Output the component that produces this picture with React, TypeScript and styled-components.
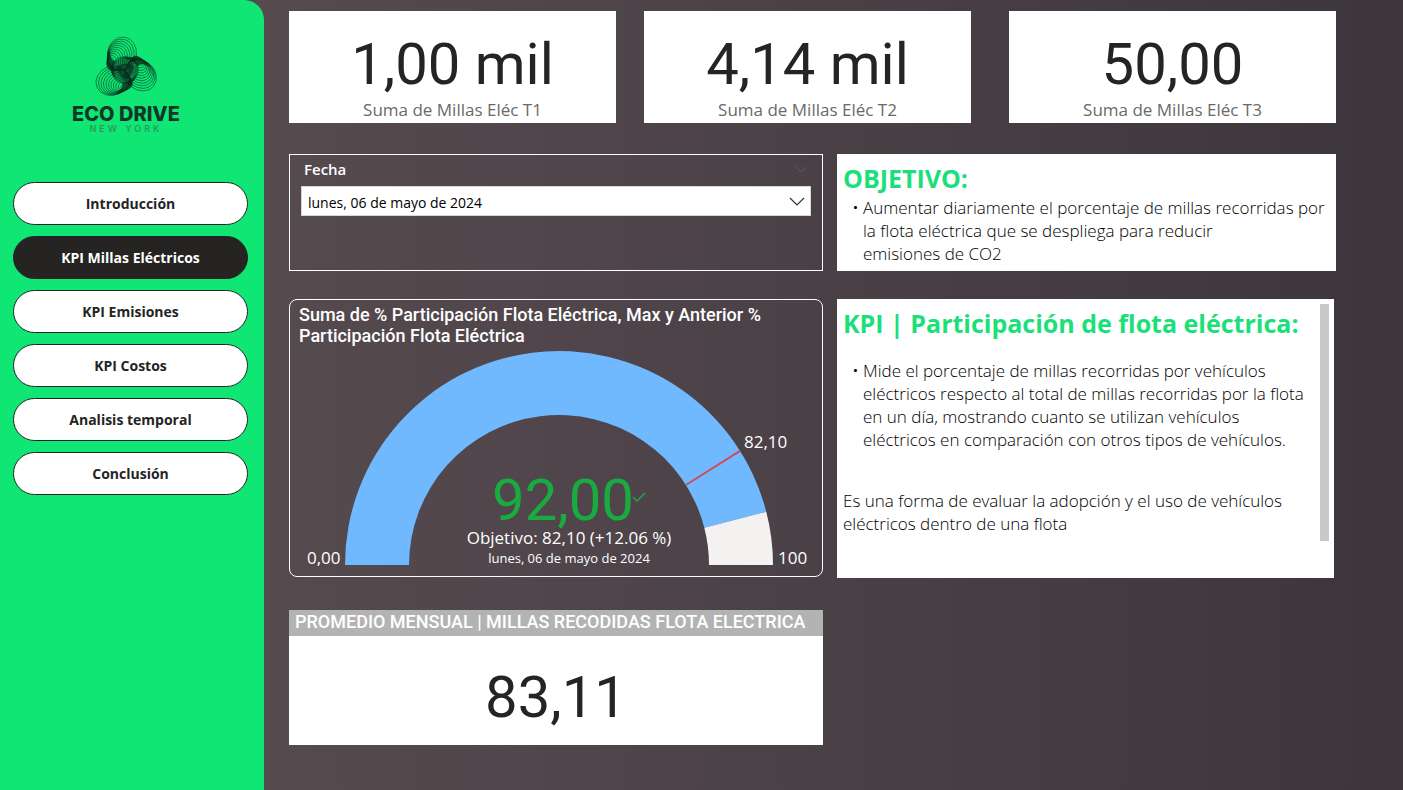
import React from "react";
import styled, { createGlobalStyle } from "styled-components";

const GlobalStyle = createGlobalStyle`
  * { box-sizing: border-box; }
  body { margin: 0; background: #fff; font-family: "Open Sans", sans-serif; color: #252423; }
  h2, p, ul, figure { margin: 0; padding: 0; }
`;

const display = `Roboto, "Liberation Sans", sans-serif`;

const Page = styled.div`
  display: flex;
  min-height: 100vh;
  background: linear-gradient(90deg, #574b50 0%, #554a4e 20%, #4a4147 58%, #3c363c 100%);
`;

const Sidebar = styled.aside`
  flex: 0 0 264px;
  padding: 34px 16px 24px 13px;
  background: #0fe673;
  border-top-right-radius: 20px;
`;

const Brand = styled.div`
  display: flex;
  flex-direction: column;
  align-items: center;
  height: 148px;
  padding-right: 9px;
`;

const BrandName = styled.div`
  margin-top: 3px;
  font: 800 20px/22px Inter, sans-serif;
  color: #14352a;
`;

const BrandPlace = styled.div`
  font: 600 9px/8px Inter, sans-serif;
  letter-spacing: 3px;
  color: #2b9a62;
`;

const Nav = styled.nav`
  display: flex;
  flex-direction: column;
  gap: 11px;
`;

const NavButton = styled.button<{ $active?: boolean }>`
  height: 43px;
  border: 1px solid #252423;
  border-radius: 22px;
  background: ${(p) => (p.$active ? "#252423" : "#fff")};
  color: ${(p) => (p.$active ? "#fff" : "#252423")};
  font: 700 14px/20px "Open Sans", sans-serif;
  cursor: pointer;
`;

const Main = styled.main`
  flex: 1;
  min-width: 0;
  padding: 11px 67px 45px 25px;
`;

const Summary = styled.section`
  display: grid;
  grid-template-columns: 682fr 327fr;
  gap: 38px;
  margin-bottom: 31px;
`;

const SummaryPair = styled.div`
  display: grid;
  grid-template-columns: 1fr 1fr;
  gap: 28px;
`;

const Card = styled.article`
  height: 112px;
  padding-top: 18px;
  background: #fff;
  text-align: center;
`;

const BigValue = styled.div`
  font: 400 58px/70px ${display};
  color: #252423;
`;

const CardLabel = styled.div`
  font: 400 17px/22px "Open Sans", sans-serif;
  color: #6b6967;
`;

const Columns = styled.div`
  display: grid;
  grid-template-columns: minmax(0, 534fr) minmax(0, 499fr);
  gap: 14px;
`;

const Column = styled.div`
  display: flex;
  flex-direction: column;
  gap: 28px;
`;

const Slicer = styled.section`
  height: 117px;
  padding: 4px 11px;
  border: 1px solid #fff;
`;

const SlicerHead = styled.div`
  display: flex;
  align-items: center;
  justify-content: space-between;
  height: 20px;
  margin-bottom: 7px;
  padding: 0 4px 0 3px;
  color: #fff;
`;

const SlicerLabel = styled.label`
  font: 600 15px/20px "Open Sans", sans-serif;
`;

const SelectBox = styled.div`
  display: grid;
  align-items: center;
  height: 30px;
  border: 1px solid #d8d6d8;
  background: #fff;
  > * { grid-area: 1 / 1; }
  > svg { justify-self: end; margin-right: 5px; pointer-events: none; }
`;

const DateSelect = styled.select`
  width: 100%;
  height: 28px;
  padding: 3px 6px 0;
  border: 0;
  background: transparent;
  appearance: none;
  font: 400 14px/20px "Open Sans", sans-serif;
  color: #000;
`;

const GaugePanel = styled.section`
  height: 278px;
  border: 1px solid #fff;
  border-radius: 8px;
  color: #fff;
`;

const GaugeTitle = styled.h2`
  height: 50px;
  padding: 4px 9px 0;
  font: 500 18px/21px ${display};
`;

const GaugeChart = styled.svg`
  display: block;
  width: 100%;
  height: 226px;
`;

const Average = styled.section`
  height: 135px;
  margin-top: 5px;
  background: #fff;
  text-align: center;
`;

const AverageTitle = styled.h2`
  height: 26px;
  margin-bottom: 26px;
  padding-left: 6px;
  background: #b3b3b3;
  color: #fff;
  font: 500 18px/23px ${display};
  text-align: left;
  white-space: nowrap;
`;

const TextPanel = styled.section<{ $scroll?: boolean }>`
  display: flex;
  justify-content: space-between;
  height: ${(p) => (p.$scroll ? "279px" : "117px")};
  margin-right: ${(p) => (p.$scroll ? "2px" : "0")};
  padding: 5px 5px 5px 6px;
  background: #fff;
`;

const PanelTitle = styled.h2<{ $spaced?: boolean }>`
  margin-bottom: ${(p) => (p.$spaced ? "18px" : "0")};
  padding-top: 1px;
  font: 700 25px/36px "Open Sans", sans-serif;
  color: #1be07a;
  white-space: nowrap;
`;

const PanelList = styled.ul`
  padding-left: 20px;
  list-style: none;
`;

const PanelItem = styled.li`
  font: 300 17px/23px "Open Sans", sans-serif;
  color: #000;
  white-space: nowrap;
  &::before { content: "·"; float: left; width: 10px; margin-left: -10px; font-weight: 700; }
`;

const PanelNote = styled.p`
  margin-top: 38px;
  font: 300 17px/23px "Open Sans", sans-serif;
  color: #000;
  white-space: nowrap;
`;

const ScrollThumb = styled.div`
  flex: none;
  width: 9px;
  height: 237px;
  background: #c8c8c8;
`;

const turns = [0, 120, 240];
const rings = Array.from({ length: 11 }, (_, i) => i);

function Logo() {
  return (
    <svg width="70" height="66" viewBox="0 0 70 66" fill="none" stroke="#08291a" strokeWidth="0.5" aria-hidden="true">
      {turns.map((turn) => (
        <g key={turn} transform={`rotate(${turn} 34 36)`}>
          {rings.map((i) => (
            <ellipse
              key={i}
              cx={31 - i}
              cy={20 + i * 1.1}
              rx={14.5 - i * 1.1}
              ry={17 - i * 1.1}
              transform="rotate(8 31 20)"
            />
          ))}
          <path d="M17 26C18 34 20 39 25 45C22 37 22 30 25 27C21 27 19 24 19 16C17 19 17 22 17 26Z" fill="#08291a" fillOpacity="0.8" stroke="none" />
        </g>
      ))}
      {rings.map((i) => (
        <circle key={i} cx="34" cy="36" r={13.5 - i * 0.9} />
      ))}
      <path d="M26 32Q35 27 43 32Q42 42 34 46Q26 41 26 32Z" fill="#08291a" fillOpacity="0.6" stroke="none" />
    </svg>
  );
}

function Chevron({ color, width }: { color: string; width: number }) {
  return (
    <svg width={width} height="9" viewBox="0 0 16 9" fill="none" stroke={color} strokeWidth="1.2" aria-hidden="true">
      <path d="M1 1l7 7 7-7" />
    </svg>
  );
}

const CX = 269;
const CY = 215;
const R_OUT = 214;
const R_IN = 150;

function point(value: number, radius: number) {
  const a = Math.PI * (1 - value / 100);
  return `${CX + radius * Math.cos(a)} ${CY - radius * Math.sin(a)}`;
}

function band(from: number, to: number) {
  return `M${point(from, R_OUT)}A${R_OUT} ${R_OUT} 0 0 1 ${point(to, R_OUT)}L${point(to, R_IN)}A${R_IN} ${R_IN} 0 0 0 ${point(from, R_IN)}Z`;
}

function Gauge() {
  return (
    <GaugeChart viewBox="0 0 532 226" fill="#fff" fontFamily='"Open Sans", sans-serif' fontSize="17">
      <path d={band(0, 92)} fill="#70b9ff" />
      <path d={band(92, 100)} fill="#f3f2f1" />
      <path d={`M${point(82.1, R_IN)}L${point(82.1, R_OUT)}`} stroke="#d04a5c" strokeWidth="2" />
      <text x="17" y="214">0,00</text>
      <text x="488" y="214">100</text>
      <text x="454" y="98">82,10</text>
      <text x="273" y="170" textAnchor="middle" fill="#1aab40" fontFamily={display} fontSize="58">92,00</text>
      <path d="M343 147l4 4 8-8" fill="none" stroke="#1aab40" strokeWidth="1.5" />
      <text x="279" y="194" textAnchor="middle">Objetivo: 82,10 (+12.06 %)</text>
      <text x="279" y="213" textAnchor="middle" fontSize="13">lunes, 06 de mayo de 2024</text>
    </GaugeChart>
  );
}

const pages = ["Introducción", "KPI Millas Eléctricos", "KPI Emisiones", "KPI Costos", "Analisis temporal", "Conclusión"];

function MilesCard({ value, label }: { value: string; label: string }) {
  return (
    <Card>
      <BigValue>{value}</BigValue>
      <CardLabel>{label}</CardLabel>
    </Card>
  );
}

export default function App() {
  return (
    <Page>
      <GlobalStyle />
      <Sidebar>
        <Brand>
          <Logo />
          <BrandName>ECO DRIVE</BrandName>
          <BrandPlace>NEW YORK</BrandPlace>
        </Brand>
        <Nav>
          {pages.map((name) => (
            <NavButton key={name} type="button" $active={name === "KPI Millas Eléctricos"}>{name}</NavButton>
          ))}
        </Nav>
      </Sidebar>
      <Main>
        <Summary>
          <SummaryPair>
            <MilesCard value="1,00 mil" label="Suma de Millas Eléc T1" />
            <MilesCard value="4,14 mil" label="Suma de Millas Eléc T2" />
          </SummaryPair>
          <MilesCard value="50,00" label="Suma de Millas Eléc T3" />
        </Summary>
        <Columns>
          <Column>
            <Slicer>
              <SlicerHead>
                <SlicerLabel htmlFor="fecha">Fecha</SlicerLabel>
                <Chevron color="#6b6267" width={12} />
              </SlicerHead>
              <SelectBox>
                <DateSelect id="fecha">
                  <option>lunes, 06 de mayo de 2024</option>
                </DateSelect>
                <Chevron color="#333" width={16} />
              </SelectBox>
            </Slicer>
            <GaugePanel>
              <GaugeTitle>Suma de % Participación Flota Eléctrica, Max y Anterior % Participación Flota Eléctrica</GaugeTitle>
              <Gauge />
            </GaugePanel>
            <Average>
              <AverageTitle>PROMEDIO MENSUAL | MILLAS RECODIDAS FLOTA ELECTRICA</AverageTitle>
              <BigValue>83,11</BigValue>
            </Average>
          </Column>
          <Column>
            <TextPanel>
              <div>
                <PanelTitle>OBJETIVO:</PanelTitle>
                <PanelList>
                  <PanelItem>
                    Aumentar diariamente el porcentaje de millas recorridas por<br />
                    la flota eléctrica que se despliega para reducir<br />
                    emisiones de CO2
                  </PanelItem>
                </PanelList>
              </div>
            </TextPanel>
            <TextPanel $scroll>
              <div>
                <PanelTitle $spaced>KPI | Participación de flota eléctrica:</PanelTitle>
                <PanelList>
                  <PanelItem>
                    Mide el porcentaje de millas recorridas por vehículos<br />
                    eléctricos respecto al total de millas recorridas por la flota<br />
                    en un día, mostrando cuanto se utilizan vehículos<br />
                    eléctricos en comparación con otros tipos de vehículos.
                  </PanelItem>
                </PanelList>
                <PanelNote>
                  Es una forma de evaluar la adopción y el uso de vehículos<br />
                  eléctricos dentro de una flota
                </PanelNote>
              </div>
              <ScrollThumb />
            </TextPanel>
          </Column>
        </Columns>
      </Main>
    </Page>
  );
}
